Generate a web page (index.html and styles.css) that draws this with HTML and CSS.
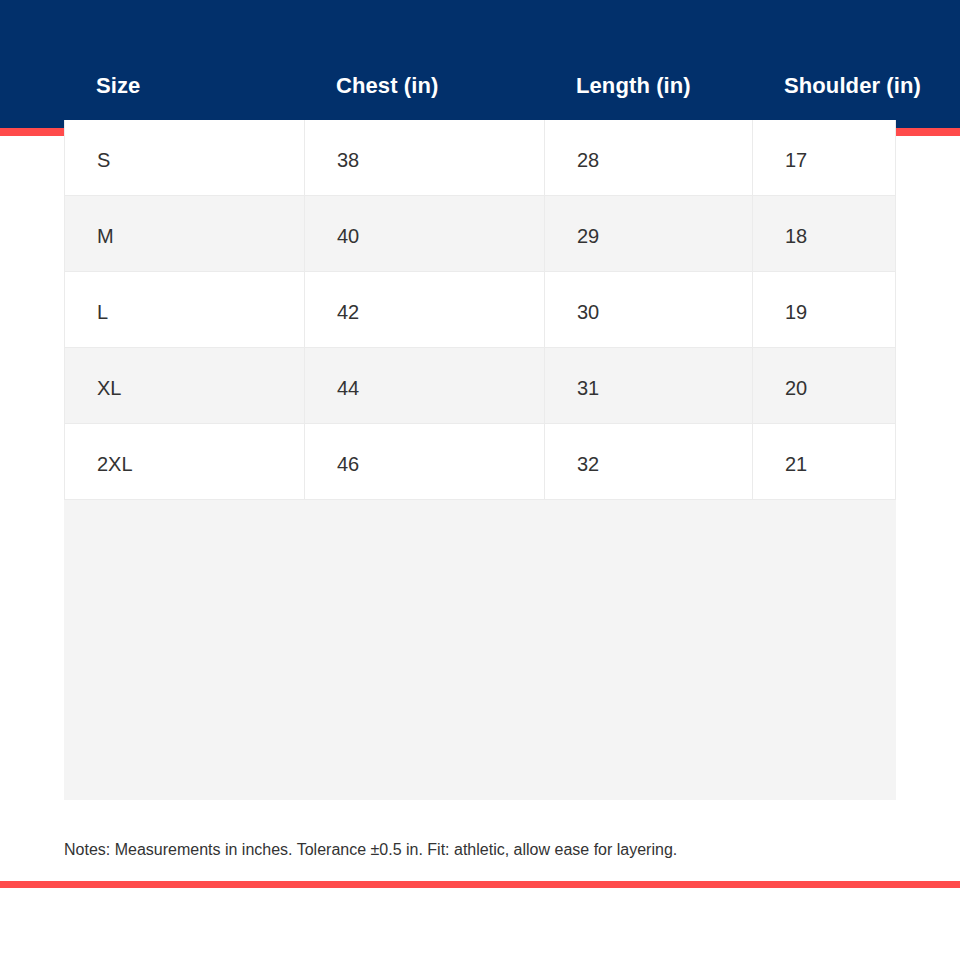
FILE: index.html
```html
<!DOCTYPE html>
<html lang="en">
<head>
<meta charset="utf-8">
<title>Size Chart</title>
<link rel="stylesheet" href="styles.css">
</head>
<body>
<div class="page">
  <div class="chart">
    <div class="head-row">
      <div class="hcell">Size</div>
      <div class="hcell">Chest (in)</div>
      <div class="hcell">Length (in)</div>
      <div class="hcell">Shoulder (in)</div>
    </div>
    <div class="body">
      <div class="row">
        <div class="cell">S</div><div class="cell">38</div><div class="cell">28</div><div class="cell">17</div>
      </div>
      <div class="row alt">
        <div class="cell">M</div><div class="cell">40</div><div class="cell">29</div><div class="cell">18</div>
      </div>
      <div class="row">
        <div class="cell">L</div><div class="cell">42</div><div class="cell">30</div><div class="cell">19</div>
      </div>
      <div class="row alt">
        <div class="cell">XL</div><div class="cell">44</div><div class="cell">31</div><div class="cell">20</div>
      </div>
      <div class="row">
        <div class="cell">2XL</div><div class="cell">46</div><div class="cell">32</div><div class="cell">21</div>
      </div>
    </div>
    <div class="filler"></div>
  </div>
  <p class="notes">Notes: Measurements in inches. Tolerance ±0.5 in. Fit: athletic, allow ease for layering.</p>
  <div class="rule"></div>
</div>
</body>
</html>
```
FILE: styles.css
```css
html, body {
  margin: 0;
  padding: 0;
  background: #ffffff;
}

body {
  font-family: "Liberation Sans", Arial, sans-serif;
  color: #333333;
}

.page {
  width: 960px;
  min-height: 960px;
  background: linear-gradient(to bottom, #02306b 0, #02306b 128px, #ff4b4b 128px, #ff4b4b 136px, #ffffff 136px);
  padding-top: 52px;
  box-sizing: border-box;
}

.chart {
  margin: 0 64px;
  width: 832px;
}

.head-row,
.row {
  display: grid;
  grid-template-columns: 240px 240px 208px 144px;
}

.head-row {
  height: 68px;
}

.hcell {
  display: flex;
  align-items: center;
  padding-left: 32px;
  white-space: nowrap;
  color: #ffffff;
  font-weight: bold;
  font-size: 22px;
  letter-spacing: 0.1px;
}

.body {
  background: #ffffff;
}

.row.alt {
  background: #f4f4f4;
}

.cell {
  height: 76px;
  box-sizing: border-box;
  border-left: 1px solid #ebebeb;
  border-bottom: 1px solid #ebebeb;
  display: flex;
  align-items: center;
  padding: 6px 0 0 32px;
  font-size: 20px;
  color: #333333;
}

.row .cell:last-child {
  border-right: 1px solid #ebebeb;
}

.filler {
  height: 300px;
  background: #f4f4f4;
}

.notes {
  margin: 40px 64px 0;
  font-size: 16px;
  line-height: 20px;
  color: #333333;
}

.rule {
  margin-top: 21px;
  height: 7px;
  background: #ff4b4b;
}
```
